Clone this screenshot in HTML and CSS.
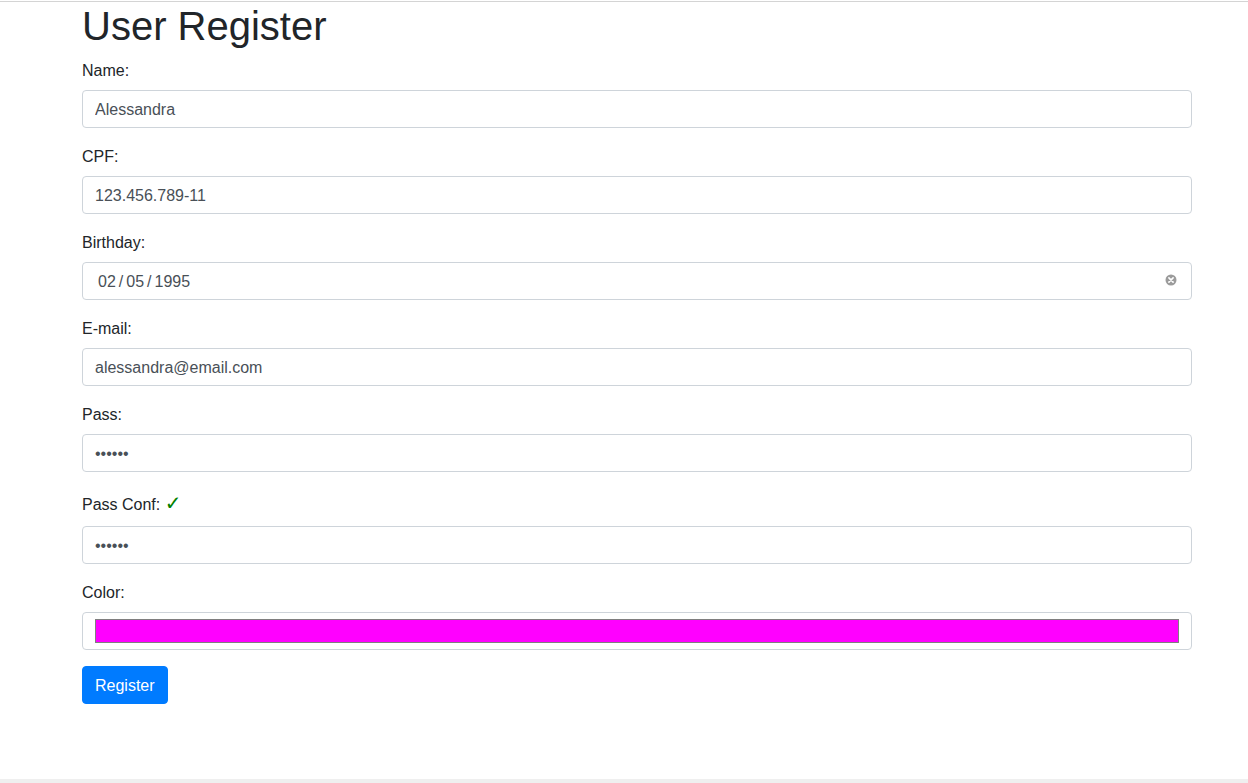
FILE: index.html
```html
<!DOCTYPE html>
<html lang="en">
<head>
<meta charset="utf-8">
<title>User Register</title>
<link rel="stylesheet" href="styles.css">
</head>
<body>
<div class="topline"></div>
<main class="container">
  <h1 class="title">User Register</h1>
  <form class="form">
    <div class="form-group">
      <label class="label" for="name">Name:</label>
      <input class="form-control" id="name" type="text" value="Alessandra">
    </div>
    <div class="form-group">
      <label class="label" for="cpf">CPF:</label>
      <input class="form-control" id="cpf" type="text" value="123.456.789-11">
    </div>
    <div class="form-group">
      <label class="label">Birthday:</label>
      <div class="form-control date-control">
        <span class="date-part">02</span><span class="date-sep">/</span><span class="date-part">05</span><span class="date-sep">/</span><span class="date-part">1995</span>
        <span class="date-clear">
          <svg width="12" height="12" viewBox="0 0 12 12" aria-hidden="true"><circle cx="6" cy="6" r="5.5" fill="#9b9b9b"/><path d="M3.9 3.9 L8.1 8.1 M8.1 3.9 L3.9 8.1" stroke="#fff" stroke-width="1.6" stroke-linecap="round"/></svg>
        </span>
      </div>
    </div>
    <div class="form-group">
      <label class="label" for="email">E-mail:</label>
      <input class="form-control" id="email" type="email" value="alessandra@email.com">
    </div>
    <div class="form-group">
      <label class="label" for="pass">Pass:</label>
      <input class="form-control" id="pass" type="password" value="123456">
    </div>
    <div class="form-group">
      <label class="label label-check" for="pass2">Pass Conf: <span class="check">✓</span></label>
      <input class="form-control" id="pass2" type="password" value="123456">
    </div>
    <div class="form-group">
      <label class="label" for="color">Color:</label>
      <input class="form-control color-control" id="color" type="color" value="#ff00ff">
    </div>
    <button class="btn btn-primary" type="button">Register</button>
  </form>
</main>
<div class="bottomstrip"></div>
</body>
</html>
```

FILE: styles.css
```css
html, body {
  margin: 0;
  padding: 0;
}
body {
  height: 100vh;
  display: flex;
  flex-direction: column;
  font-family: "Liberation Sans", Arial, sans-serif;
  font-size: 16px;
  line-height: 1.5;
  color: #212529;
  background: #fff;
}
.topline {
  margin-top: 1px;
  height: 1px;
  background: #d4d4d4;
  flex: none;
}
.container {
  flex: 1;
  padding-left: 82px;
  width: 1110px;
}
.title {
  margin: 0 0 8px 0;
  font-size: 40px;
  font-weight: 500;
  line-height: 1.2;
}
.form {
  margin: 0;
}
.form-group {
  margin-bottom: 16px;
}
.label {
  display: inline-block;
  padding-top: 1px;
  margin-bottom: 7px;
}
.label-check {
  padding-top: 0;
  margin-bottom: 8px;
}
.check {
  font-family: "DejaVu Sans", sans-serif;
  font-size: 20px;
  color: #008000;
}
.form-control {
  display: block;
  box-sizing: border-box;
  width: 100%;
  height: 38px;
  margin: 0;
  padding: 7px 12px 5px 12px;
  font-family: "Liberation Sans", Arial, sans-serif;
  font-size: 16px;
  line-height: 1.5;
  color: #495057;
  background: #fff;
  border: 1px solid #ced4da;
  border-radius: 4px;
  outline: none;
}
.date-control {
  display: flex;
  align-items: center;
  padding-left: 15px;
  padding-right: 14px;
}
.date-sep {
  margin: 0 3px;
}
.date-clear {
  margin-left: auto;
  display: flex;
  align-items: center;
  margin-top: -5px;
}
.color-control {
  padding: 6px 12px;
  cursor: pointer;
}
.color-control::-webkit-color-swatch-wrapper {
  padding: 0;
}
.color-control::-webkit-color-swatch {
  border: 1px solid #7f7f7f;
  border-radius: 0;
}
.btn {
  display: inline-block;
  box-sizing: border-box;
  height: 38px;
  padding: 7px 12px 5px 12px;
  font-family: "Liberation Sans", Arial, sans-serif;
  font-size: 16px;
  line-height: 1.5;
  border: 1px solid transparent;
  border-radius: 4px;
  cursor: pointer;
}
.btn-primary {
  color: #fff;
  background: #007bff;
  border-color: #007bff;
}
.bottomstrip {
  flex: none;
  height: 4px;
  background: #efefef;
}
```
